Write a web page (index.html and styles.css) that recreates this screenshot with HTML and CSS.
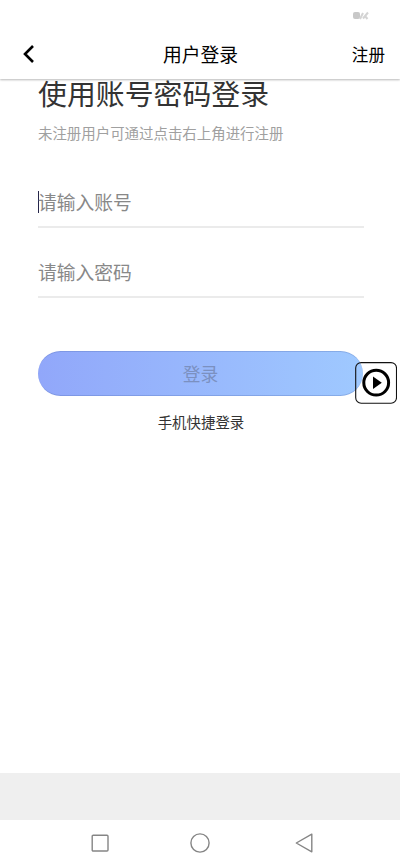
FILE: index.html
```html
<!DOCTYPE html>
<html lang="zh-CN">
<head>
<meta charset="utf-8">
<title>用户登录</title>
<link rel="stylesheet" href="styles.css">
</head>
<body>
<div class="screen">
  <div class="status">
    <svg width="18" height="9" viewBox="0 0 18 9"><rect x="2" y="1" width="7" height="7" rx="2" fill="#c8c8c8"/><path d="M9 8l3-6M12 7.500l5-6M14 5l2.500 3" stroke="#d4d4d4" stroke-width="2" fill="none"/></svg>
  </div>
  <header class="bar">
    <svg class="back" width="14" height="20" viewBox="0 0 14 20"><path d="M11 2L3 10l8 8" fill="none" stroke="#000" stroke-width="2.6"/></svg>
    <div class="bar-title">用户登录</div>
    <div class="register">注册</div>
  </header>
  <main class="content">
    <h1>使用账号密码登录</h1>
    <p class="hint">未注册用户可通过点击右上角进行注册</p>
    <div class="field"><span class="caret"></span>请输入账号</div>
    <div class="field">请输入密码</div>
    <div class="submit">登录</div>
    <div class="quick">手机快捷登录</div>
  </main>
  <div class="strip"></div>
  <nav class="nav">
    <svg width="20" height="20" viewBox="0 0 20 20"><rect x="2.2" y="2.2" width="15.8" height="15.8" rx="1"/></svg>
    <svg width="20" height="20" viewBox="0 0 20 20"><circle cx="10" cy="10" r="9.1"/></svg>
    <svg width="20" height="20" viewBox="0 0 20 20"><path d="M2.300 10L17.800 1.200V18.800Z"/></svg>
  </nav>
  <div class="float">
    <svg width="42" height="42" viewBox="0 0 42 42"><rect x=".7" y=".6" width="40.8" height="40.7" rx="5.5" fill="none" stroke="#111" stroke-width="1.1"/><circle cx="21.200" cy="20.700" r="12.400" fill="none" stroke="#000" stroke-width="3"/><path d="M18 14.500L26.800 20.700L18 26.900Z"/></svg>
  </div>
</div>
</body>
</html>
```
FILE: styles.css
```css
body {
  margin: 0;
  font-family: "Noto Sans CJK SC", sans-serif;
  background: #fff;
}
.screen {
  position: relative;
  display: flex;
  flex-direction: column;
  height: 866px;
  overflow: hidden;
}
svg { display: block; }
.status {
  display: flex;
  justify-content: flex-end;
  box-sizing: border-box;
  height: 30px;
  padding: 11px 31px 0 0;
}
.bar {
  display: grid;
  grid-template-columns: 1fr auto 1fr;
  align-items: center;
  box-sizing: border-box;
  height: 49px;
  padding: 0 15px 2px 22px;
  box-shadow: 0 1px 2px rgba(0, 0, 0, .28);
  clip-path: inset(0 0 -4px 0);
  color: #000;
}
.bar-title {
  font-size: 18.8px;
  line-height: 28px;
  margin-left: -6px;
}
.register {
  justify-self: end;
  font-size: 16.6px;
  line-height: 24px;
}
.content {
  flex: 1;
  padding: 0 36px 0 38px;
}
h1 {
  margin: 0;
  font-size: 28.9px;
  font-weight: 400;
  line-height: 26px;
  color: #333;
}
.hint {
  margin: 17px 0 0;
  font-size: 14.45px;
  line-height: 22px;
  color: #a0a0a0;
}
.field {
  display: flex;
  align-items: center;
  box-sizing: border-box;
  height: 50px;
  padding-bottom: 2px;
  border-bottom: 2px solid #ebebeb;
  font-size: 18.8px;
  color: #888;
}
.hint + .field { margin-top: 34px; }
.field + .field { margin-top: 20px; }
.caret {
  width: 1px;
  height: 22px;
  margin: 2px -1px 0 0;
  background: #26264a;
}
.submit {
  box-sizing: border-box;
  width: 325px;
  height: 45px;
  margin-top: 53px;
  border: 1px solid rgba(80, 110, 180, .3);
  border-width: 1px 0;
  border-radius: 23px;
  background: linear-gradient(90deg, #91a7fa, #9fc9ff);
  font-size: 17.8px;
  line-height: 42px;
  text-align: center;
  color: #7b90c0;
}
.quick {
  margin-top: 15px;
  font-size: 14.45px;
  line-height: 22px;
  text-align: center;
  color: #333;
}
.strip {
  height: 47px;
  background: #efefef;
}
.nav {
  display: flex;
  justify-content: space-between;
  align-items: center;
  height: 46px;
  padding: 0 86px 0 90px;
}
.nav svg {
  fill: none;
  stroke: #858585;
  stroke-width: 1.4;
  stroke-linejoin: round;
}
.nav svg:nth-child(2) { margin-left: -4px; }
.float {
  position: absolute;
  left: 355px;
  top: 362px;
}
```
